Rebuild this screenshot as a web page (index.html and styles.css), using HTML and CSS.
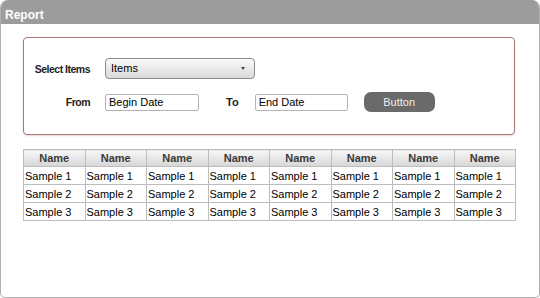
FILE: index.html
```html
<!DOCTYPE html>
<html lang="en-US">
<head>
  <meta charset="UTF-8">
  <title>Report</title>
  <link rel="stylesheet" href="styles.css">
</head>
<body>
  <div class="panel">
    <div class="panel-head">Report</div>
    <div class="panel-body">
      <div class="filter">
        <div class="filter-row">
          <span class="label">Select Items</span>
          <div class="select">
            <span>Items</span>
            <span class="arrow"></span>
          </div>
        </div>
        <div class="filter-row second">
          <span class="label">From</span>
          <div class="input begin">Begin Date</div>
          <span class="label-to">To</span>
          <div class="input end">End Date</div>
          <div class="button">Button</div>
        </div>
      </div>

      <table class="grid">
        <thead>
          <tr>
            <th>Name</th><th>Name</th><th>Name</th><th>Name</th>
            <th>Name</th><th>Name</th><th>Name</th><th>Name</th>
          </tr>
        </thead>
        <tbody>
          <tr>
            <td>Sample 1</td><td>Sample 1</td><td>Sample 1</td><td>Sample 1</td>
            <td>Sample 1</td><td>Sample 1</td><td>Sample 1</td><td>Sample 1</td>
          </tr>
          <tr>
            <td>Sample 2</td><td>Sample 2</td><td>Sample 2</td><td>Sample 2</td>
            <td>Sample 2</td><td>Sample 2</td><td>Sample 2</td><td>Sample 2</td>
          </tr>
          <tr>
            <td>Sample 3</td><td>Sample 3</td><td>Sample 3</td><td>Sample 3</td>
            <td>Sample 3</td><td>Sample 3</td><td>Sample 3</td><td>Sample 3</td>
          </tr>
        </tbody>
      </table>
    </div>
  </div>
</body>
</html>
```

FILE: styles.css
```css
body {
  margin: 0;
  padding: 0;
  font-family: "Liberation Sans", Arial, sans-serif;
  font-size: 11px;
  color: #000;
  background: #fff;
}

/* outer panel */

.panel {
  box-sizing: border-box;
  width: 540px;
  height: 298px;
  border: 1px solid #b0b0b0;
  border-top: none;
  border-radius: 8px 8px 5px 5px;
  overflow: hidden;
}
.panel-head {
  height: 24px;
  box-sizing: border-box;
  padding: 8px 0 0 5px;
  margin: 0 -1px;
  background: #9c9c9c;
  color: #fff;
  font-size: 12px;
  font-weight: bold;
  line-height: 14px;
}
.panel-body {
  padding: 13px 0 0 22px;
}

/* filter box */

.filter {
  box-sizing: border-box;
  width: 492px;
  height: 98px;
  padding: 20px 0 0 12px;
  border: 1px solid #a77876;
  border-radius: 4px;
  box-shadow: 0 1px 2px rgba(0,0,0,.15);
}
.filter-row {
  display: flex;
  align-items: center;
  height: 21px;
}
.filter-row.second {
  margin-top: 13px;
  height: 20px;
}
.label, .label-to {
  font-weight: bold;
  color: #222;
  white-space: nowrap;
}
.label {
  display: flex;
  justify-content: flex-end;
  flex: none;
  width: 54px;
  margin-right: 15px;
  font-size: 10.5px;
  letter-spacing: -0.5px;
}
.label-to {
  margin-left: 27px;
  margin-right: 16px;
}
.select {
  box-sizing: border-box;
  position: relative;
  width: 150px;
  height: 21px;
  padding: 0 0 0 5px;
  line-height: 19px;
  border: 1px solid #8a8a8a;
  border-radius: 4px;
  background: linear-gradient(#fafafa, #d9d9d9);
}
.arrow {
  position: absolute;
  right: 9px;
  top: 8px;
  border-left: 2.5px solid transparent;
  border-right: 2.5px solid transparent;
  border-top: 3px solid #444;
}
.input {
  box-sizing: border-box;
  height: 17px;
  padding-left: 3px;
  line-height: 15px;
  border: 1px solid #b3b3b3;
  border-radius: 2px;
  background: #fff;
}
.input.begin {
  width: 94px;
}
.input.end {
  width: 93px;
}
.button {
  box-sizing: border-box;
  width: 71px;
  height: 20px;
  margin-left: 16px;
  border-radius: 7px;
  background: #6a6a6a;
  color: #eee;
  text-align: center;
  line-height: 20px;
}

/* data table */

.grid {
  width: 493px;
  margin-top: 14px;
  border-collapse: collapse;
  border: 1px solid #a9a9a9;
  table-layout: fixed;
}
.grid th {
  height: 16px;
  padding: 0;
  font-weight: bold;
  color: #3a3a3a;
  border: 1px solid #bdbdbd;
  background: linear-gradient(#f7f7f7, #d6d6d6);
}
.grid td {
  height: 17px;
  padding: 0 0 0 1px;
  border: 1px solid #bdbdbd;
  white-space: nowrap;
  overflow: hidden;
}
```
